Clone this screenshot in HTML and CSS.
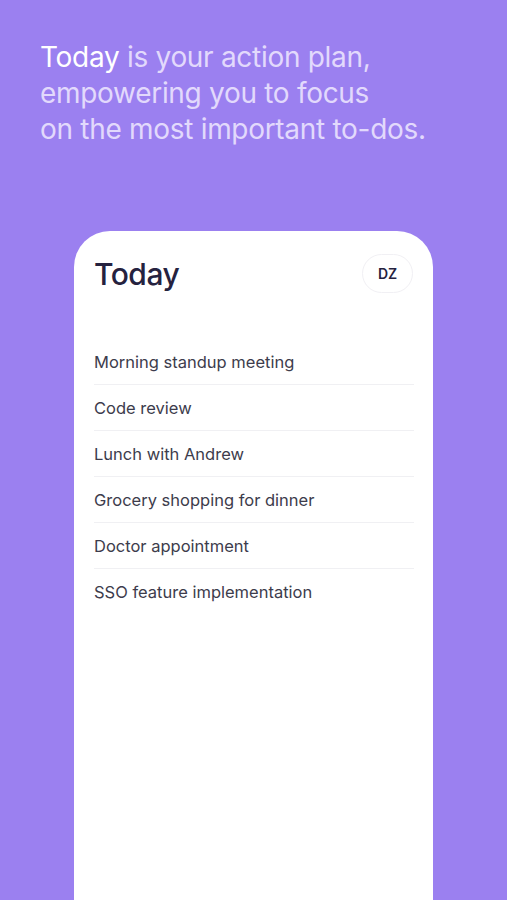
FILE: index.html
```html
<!DOCTYPE html>
<html lang="en">
<head>
    <meta charset="UTF-8">
    <meta name="viewport" content="width=device-width, initial-scale=1.0">
    <title>Today</title>
    <link rel="stylesheet" href="styles.css">
</head>
<body>
    <header class="intro">
        <h1><span class="accent">Today</span> is your action plan,<br>
            empowering you to focus<br>
            on the most important to-dos.</h1>
    </header>

    <div class="card">
        <div class="card-head">
            <h2>Today</h2>
            <div class="avatar">DZ</div>
        </div>
        <ul class="todo-list">
            <li>Morning standup meeting</li>
            <li>Code review</li>
            <li>Lunch with Andrew</li>
            <li>Grocery shopping for dinner</li>
            <li>Doctor appointment</li>
            <li>SSO feature implementation</li>
        </ul>
    </div>
</body>
</html>
```

FILE: styles.css
```css
body {
    font-family: 'Inter', 'Noto Sans', sans-serif;
    background-color: #9b80f0;
    margin: 0;
    padding: 0;
    height: 900px;
    overflow: hidden;
}
.intro {
    padding: 39px 0 0 40px;
}
.intro h1 {
    margin: 0;
    font-size: 28px;
    font-weight: 400;
    line-height: 36px;
    color: #e2d9fc;
    letter-spacing: -0.3px;
}
.intro .accent {
    color: #ffffff;
}
.card {
    background-color: white;
    margin: 84px 0 0 74px;
    width: 359px;
    height: 700px;
    border-radius: 36px 36px 0 0;
    padding: 0 19px 0 20px;
    box-sizing: border-box;
}
.card-head {
    display: flex;
    justify-content: space-between;
    align-items: center;
    padding-top: 23px;
    height: 39px;
}
.card-head h2 {
    margin: 0;
    font-size: 30px;
    font-weight: 500;
    color: #25223f;
    letter-spacing: -0.5px;
}
.avatar {
    width: 51px;
    height: 39px;
    border: 1px solid #f1f0f4;
    border-radius: 20px;
    box-sizing: border-box;
    display: flex;
    align-items: center;
    justify-content: center;
    font-size: 14px;
    font-weight: 600;
    color: #25223f;
    margin-right: 1px;
}
.todo-list {
    list-style: none;
    margin: 46px 0 0 0;
    padding: 0;
}
.todo-list li {
    height: 46px;
    line-height: 46px;
    font-size: 16.5px;
    color: #3d3c4c;
    border-bottom: 1px solid #f0f0f3;
    box-sizing: border-box;
}
.todo-list li:last-child {
    border-bottom: none;
}
```
